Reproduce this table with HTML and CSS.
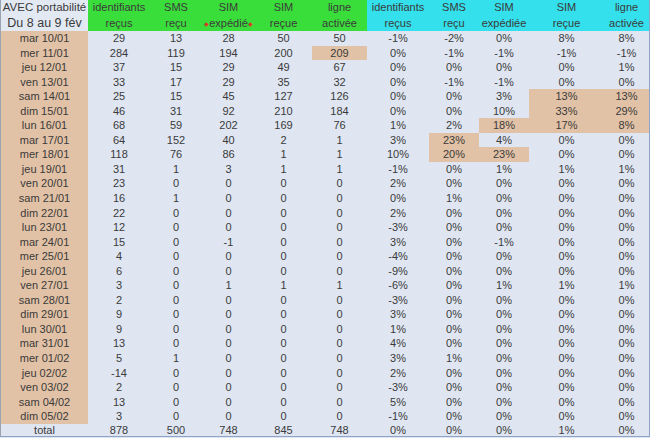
FILE: index.html
```html
<!DOCTYPE html>
<html lang="fr">
<head>
<meta charset="utf-8">
<title>AVEC portabilité</title>
<link rel="stylesheet" href="styles.css">
</head>
<body>
<div class="sheet">
  <div class="head">
    <div class="hc corner"><span class="l1">AVEC portabilité</span><span class="l2 big">Du 8 au 9 fév</span></div>
    <div class="hc g"><span class="l1">identifiants</span><span class="l2">reçus</span></div>
    <div class="hc g"><span class="l1">SMS</span><span class="l2">reçu</span></div>
    <div class="hc g"><span class="l1">SIM</span><span class="l2"><i class="mk">◆</i>expédié<i class="mk">◆</i></span></div>
    <div class="hc g"><span class="l1">SIM</span><span class="l2">reçue</span></div>
    <div class="hc g"><span class="l1">ligne</span><span class="l2">activée</span></div>
    <div class="hc c"><span class="l1">identifiants</span><span class="l2">reçus</span></div>
    <div class="hc c"><span class="l1">SMS</span><span class="l2">reçu</span></div>
    <div class="hc c"><span class="l1">SIM</span><span class="l2">expédiée</span></div>
    <div class="hc c"><span class="l1">SIM</span><span class="l2">reçue</span></div>
    <div class="hc c"><span class="l1">ligne</span><span class="l2">activée</span></div>
  </div>
  <div class="row"><span class="d">mar 10/01</span><span>29</span><span>13</span><span>28</span><span>50</span><span>50</span><span>-1%</span><span>-2%</span><span>0%</span><span>8%</span><span>8%</span></div>
  <div class="row"><span class="d">mer 11/01</span><span>284</span><span>119</span><span>194</span><span>200</span><span class="hl">209</span><span>0%</span><span>-1%</span><span>-1%</span><span>-1%</span><span>-1%</span></div>
  <div class="row"><span class="d">jeu 12/01</span><span>37</span><span>15</span><span>29</span><span>49</span><span>67</span><span>0%</span><span>0%</span><span>0%</span><span>0%</span><span>1%</span></div>
  <div class="row"><span class="d">ven 13/01</span><span>33</span><span>17</span><span>29</span><span>35</span><span>32</span><span>0%</span><span>-1%</span><span>-1%</span><span>0%</span><span>0%</span></div>
  <div class="row"><span class="d">sam 14/01</span><span>25</span><span>15</span><span>45</span><span>127</span><span>126</span><span>0%</span><span>0%</span><span>3%</span><span class="hl">13%</span><span class="hl">13%</span></div>
  <div class="row"><span class="d">dim 15/01</span><span>46</span><span>31</span><span>92</span><span>210</span><span>184</span><span>0%</span><span>0%</span><span>10%</span><span class="hl">33%</span><span class="hl">29%</span></div>
  <div class="row"><span class="d">lun 16/01</span><span>68</span><span>59</span><span>202</span><span>169</span><span>76</span><span>1%</span><span>2%</span><span class="hl">18%</span><span class="hl">17%</span><span class="hl">8%</span></div>
  <div class="row"><span class="d">mar 17/01</span><span>64</span><span>152</span><span>40</span><span>2</span><span>1</span><span>3%</span><span class="hl">23%</span><span>4%</span><span>0%</span><span>0%</span></div>
  <div class="row"><span class="d">mer 18/01</span><span>118</span><span>76</span><span>86</span><span>1</span><span>1</span><span>10%</span><span class="hl">20%</span><span class="hl">23%</span><span>0%</span><span>0%</span></div>
  <div class="row"><span class="d">jeu 19/01</span><span>31</span><span>1</span><span>3</span><span>1</span><span>1</span><span>-1%</span><span>0%</span><span>1%</span><span>1%</span><span>1%</span></div>
  <div class="row"><span class="d">ven 20/01</span><span>23</span><span>0</span><span>0</span><span>0</span><span>0</span><span>2%</span><span>0%</span><span>0%</span><span>0%</span><span>0%</span></div>
  <div class="row"><span class="d">sam 21/01</span><span>16</span><span>1</span><span>0</span><span>0</span><span>0</span><span>0%</span><span>1%</span><span>0%</span><span>0%</span><span>0%</span></div>
  <div class="row"><span class="d">dim 22/01</span><span>22</span><span>0</span><span>0</span><span>0</span><span>0</span><span>2%</span><span>0%</span><span>0%</span><span>0%</span><span>0%</span></div>
  <div class="row"><span class="d">lun 23/01</span><span>12</span><span>0</span><span>0</span><span>0</span><span>0</span><span>-3%</span><span>0%</span><span>0%</span><span>0%</span><span>0%</span></div>
  <div class="row"><span class="d">mar 24/01</span><span>15</span><span>0</span><span>-1</span><span>0</span><span>0</span><span>3%</span><span>0%</span><span>-1%</span><span>0%</span><span>0%</span></div>
  <div class="row"><span class="d">mer 25/01</span><span>4</span><span>0</span><span>0</span><span>0</span><span>0</span><span>-4%</span><span>0%</span><span>0%</span><span>0%</span><span>0%</span></div>
  <div class="row"><span class="d">jeu 26/01</span><span>6</span><span>0</span><span>0</span><span>0</span><span>0</span><span>-9%</span><span>0%</span><span>0%</span><span>0%</span><span>0%</span></div>
  <div class="row"><span class="d">ven 27/01</span><span>3</span><span>0</span><span>1</span><span>1</span><span>1</span><span>-6%</span><span>0%</span><span>1%</span><span>1%</span><span>1%</span></div>
  <div class="row"><span class="d">sam 28/01</span><span>2</span><span>0</span><span>0</span><span>0</span><span>0</span><span>-3%</span><span>0%</span><span>0%</span><span>0%</span><span>0%</span></div>
  <div class="row"><span class="d">dim 29/01</span><span>9</span><span>0</span><span>0</span><span>0</span><span>0</span><span>3%</span><span>0%</span><span>0%</span><span>0%</span><span>0%</span></div>
  <div class="row"><span class="d">lun 30/01</span><span>9</span><span>0</span><span>0</span><span>0</span><span>0</span><span>1%</span><span>0%</span><span>0%</span><span>0%</span><span>0%</span></div>
  <div class="row"><span class="d">mar 31/01</span><span>13</span><span>0</span><span>0</span><span>0</span><span>0</span><span>4%</span><span>0%</span><span>0%</span><span>0%</span><span>0%</span></div>
  <div class="row"><span class="d">mer 01/02</span><span>5</span><span>1</span><span>0</span><span>0</span><span>0</span><span>3%</span><span>1%</span><span>0%</span><span>0%</span><span>0%</span></div>
  <div class="row"><span class="d">jeu 02/02</span><span>-14</span><span>0</span><span>0</span><span>0</span><span>0</span><span>2%</span><span>0%</span><span>0%</span><span>0%</span><span>0%</span></div>
  <div class="row"><span class="d">ven 03/02</span><span>2</span><span>0</span><span>0</span><span>0</span><span>0</span><span>-3%</span><span>0%</span><span>0%</span><span>0%</span><span>0%</span></div>
  <div class="row"><span class="d">sam 04/02</span><span>13</span><span>0</span><span>0</span><span>0</span><span>0</span><span>5%</span><span>0%</span><span>0%</span><span>0%</span><span>0%</span></div>
  <div class="row"><span class="d">dim 05/02</span><span>3</span><span>0</span><span>0</span><span>0</span><span>0</span><span>-1%</span><span>0%</span><span>0%</span><span>0%</span><span>0%</span></div>
  <div class="row total"><span>total</span><span>878</span><span>500</span><span>748</span><span>845</span><span>748</span><span>0%</span><span>0%</span><span>0%</span><span>1%</span><span>0%</span></div>
</div>
</body>
</html>
```
FILE: styles.css
```css
html, body {
  margin: 0;
  padding: 0;
  background: #dfe6f2;
}
body {
  width: 650px;
  height: 438px;
  overflow: hidden;
  font-family: "Liberation Sans", Arial, sans-serif;
  font-size: 11px;
  color: #3a3a3a;
}
.sheet {
  width: 650px;
  height: 437px;
  box-sizing: border-box;
  border-left: 1px solid #9aa3b0;
  border-right: 1px solid #8ea4c6;
  border-bottom: 1px solid #8ea4c6;
  background: #dfe6f2;
}
.head, .row {
  display: grid;
  grid-template-columns: 87px 62px 52px 53px 57px 55px 62px 50px 50px 75px 45px;
}
.head {
  height: 31px;
}
.hc {
  display: flex;
  flex-direction: column;
  align-items: center;
  text-align: center;
  white-space: nowrap;
}
.hc span {
  display: block;
  height: 15px;
  line-height: 15px;
}
.hc .l1 {
  height: 16px;
  line-height: 15px;
}
.corner {
  background: #e3e9f3;
}
.corner .l1 {
  font-size: 11.5px;
}
.corner .big {
  font-size: 12.5px;
}
.g {
  background: #3ade3a;
}
.c {
  background: #33e0ec;
}
.mk {
  font-style: normal;
  color: #d23a2a;
  font-size: 6px;
  vertical-align: 1px;
}
.row {
  height: 14.55px;
}
.row span {
  display: block;
  text-align: center;
  line-height: 14.55px;
  white-space: nowrap;
}
.row .d {
  background: #e2c2a6;
}
.row .hl {
  background: #e2c2a6;
}
.row.total {
  height: 12px;
}
.row.total span {
  line-height: 12px;
}
```
